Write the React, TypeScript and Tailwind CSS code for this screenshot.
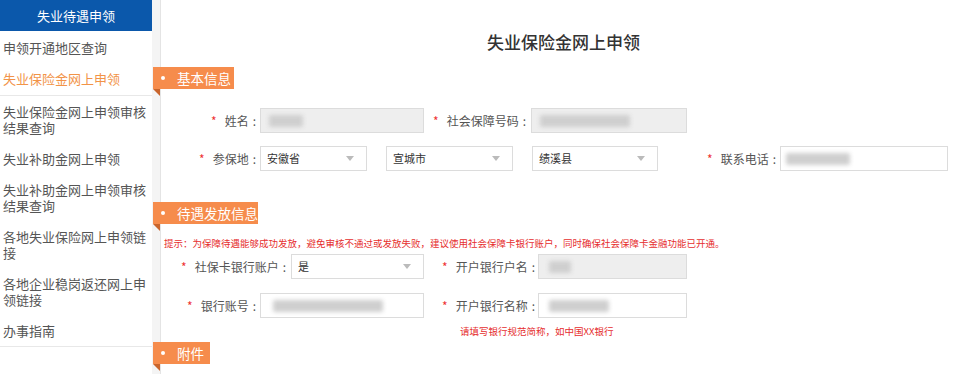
import React from "react";

const font = { fontFamily: '"Noto Sans CJK SC", "Noto Sans", sans-serif' };

type NavItem = { text: string; active?: boolean };

const navItems: NavItem[] = [
  { text: "申领开通地区查询" },
  { text: "失业保险金网上申领", active: true },
  { text: "失业保险金网上申领审核结果查询" },
  { text: "失业补助金网上申领" },
  { text: "失业补助金网上申领审核结果查询" },
  { text: "各地失业保险网上申领链接" },
  { text: "各地企业稳岗返还网上申领链接" },
  { text: "办事指南" },
];

const Sidebar = () => (
  <aside className="w-[152px] shrink-0 bg-white">
    <div className="flex h-[31px] items-center justify-center bg-[#0b58ab] text-[13px] text-white">
      失业待遇申领
    </div>
    <ul className="pt-[1px]">
      {navItems.map((item, i) => (
        <li
          key={i}
          className={
            "px-[3px] text-[13px] leading-[16px] " +
            (item.active ? "text-[#f29347] " : "text-[#555] ") +
            (i === 1 ? "border-b border-[#e8e8e8] pb-[8px] pt-[8px] " : "pb-[7px] pt-[8px] ") +
            (i === navItems.length - 1 ? "border-b border-[#e8e8e8] " : "")
          }
        >
          {item.text}
        </li>
      ))}
    </ul>
  </aside>
);

const Tab = ({ title, w }: { title: string; w: string }) => (
  <div className="relative -ml-[8px] flex">
    <div className={"flex h-[22px] items-center bg-[#f68c4c] text-[13.5px] text-white " + w}>
      <span className="ml-[8px] mr-[12px] h-[4px] w-[4px] rounded-full bg-white" />
      {title}
    </div>
    <div className="absolute left-0 top-[22px] h-0 w-0 border-l-[7px] border-t-[7px] border-l-transparent border-t-[#c9652c]" />
  </div>
);

const Label = ({ text, w }: { text: string; w: string }) => (
  <div className={"flex shrink-0 items-center justify-end text-[12px] text-[#555] " + w}>
    <span className="mr-[8px] text-[#e33]">*</span>
    {text}
    <span className="ml-[4px] mr-[2px]">:</span>
  </div>
);

const Blur = ({ w, ml = "ml-[10px]" }: { w: string; ml?: string }) => (
  <div className={"h-[12px] rounded-[2px] bg-[#cfcfcf] blur-[2px] " + w + " " + ml} />
);

const Input = ({ w, gray, blur, ml = "ml-[2px]" }: { w: string; gray?: boolean; blur?: React.ReactNode; ml?: string }) => (
  <div
    className={
      "flex h-[25px] shrink-0 items-center border border-[#dcdcdc] " +
      (gray ? "bg-[#eeeeee] " : "bg-white ") +
      w + " " + ml
    }
  >
    {blur}
  </div>
);

const Select = ({ w, text, ml = "ml-[2px]" }: { w: string; text: string; ml?: string }) => (
  <div className={"flex h-[25px] shrink-0 items-center justify-between border border-[#dcdcdc] bg-white pl-[6px] pr-[12px] text-[11px] text-[#333] " + w + " " + ml}>
    <span>{text}</span>
    <span className="h-0 w-0 border-x-[4px] border-t-[5px] border-x-transparent border-t-[#bbb]" />
  </div>
);

export default function App() {
  return (
    <div className="flex h-[374px] w-[980px] overflow-hidden bg-[#f4f4f4]" style={font}>
      <Sidebar />
      <div className="ml-[8px] flex-1 border-l border-[#e4e4e4] bg-white">
        <h1 className="pr-[14px] pt-[31px] text-center text-[17px] font-medium leading-[22px] text-[#333]">
          失业保险金网上申领
        </h1>
        <div className="mt-[14px]">
          <Tab title="基本信息" w="w-[81px]" />
        </div>
        <div className="mt-[19px] flex">
          <Label text="姓名" w="w-[97px]" />
          <Input w="w-[164px]" gray blur={<Blur w="w-[34px]" ml="ml-[8px]" />} />
          <Label text="社会保障号码" w="w-[104px]" />
          <Input w="w-[156px]" gray ml="ml-[3px]" blur={<Blur w="w-[90px]" ml="ml-[8px]" />} />
        </div>
        <div className="mt-[13px] flex">
          <Label text="参保地" w="w-[97px]" />
          <Select w="w-[107px]" text="安徽省" />
          <Select w="w-[127px]" text="宣城市" ml="ml-[19px]" />
          <Select w="w-[126px]" text="绩溪县" ml="ml-[19px]" />
          <Label text="联系电话" w="w-[120px]" />
          <Input w="w-[168px]" blur={<Blur w="w-[64px]" ml="ml-[5px]" />} />
        </div>
        <div className="mt-[31px]">
          <Tab title="待遇发放信息" w="w-[105px]" />
        </div>
        <p className="ml-[3px] mt-[12px] text-[9.5px] leading-[14px] text-[#e62e2e]">
          提示：为保障待遇能够成功发放，避免审核不通过或发放失败，建议使用社会保障卡银行账户，同时确保社会保障卡金融功能已开通。
        </p>
        <div className="mt-[4px] flex">
          <Label text="社保卡银行账户" w="w-[127px]" />
          <Select w="w-[133px]" text="是" ml="ml-[3px]" />
          <Label text="开户银行户名" w="w-[113px]" />
          <Input w="w-[149px]" gray ml="ml-[1px]" blur={<Blur w="w-[22px]" ml="ml-[10px]" />} />
        </div>
        <div className="mt-[14px] flex">
          <Label text="银行账号" w="w-[97px]" />
          <Input w="w-[164px]" blur={<Blur w="w-[110px]" ml="ml-[12px]" />} />
          <Label text="开户银行名称" w="w-[113px]" />
          <Input w="w-[149px]" ml="ml-[1px]" blur={<Blur w="w-[60px]" ml="ml-[10px]" />} />
        </div>
        <p className="ml-[299px] mt-[6px] text-[9.5px] leading-[14px] text-[#e62e2e]">
          请填写银行规范简称，如中国XX银行
        </p>
        <div className="mt-[4px]">
          <Tab title="附件" w="w-[57px]" />
        </div>
      </div>
    </div>
  );
}
